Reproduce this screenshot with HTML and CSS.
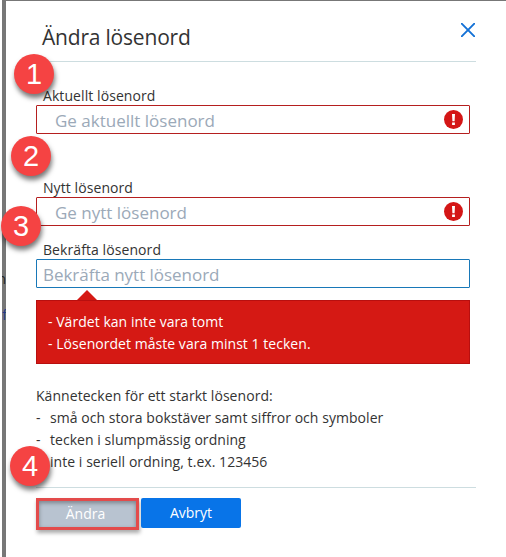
FILE: index.html
```html
<!DOCTYPE html>
<html lang="sv">
<head>
<meta charset="utf-8">
<title>Ändra lösenord</title>
<link rel="stylesheet" href="styles.css">
</head>
<body>
<div class="backdrop"><span class="behind behind-text">n</span><span class="behind behind-link">f</span></div>
<main class="dialog">
  <header class="header">
    <h1>Ändra lösenord</h1>
    <svg class="close" viewBox="0 0 14 14"><path d="M.7.7 13.3 13.3M13.3.7.7 13.3"/></svg>
  </header>
  <form class="form">
    <div class="field current">
      <label>Aktuellt lösenord</label>
      <div class="input invalid"><span>Ge aktuellt lösenord</span>
        <svg class="alert" viewBox="0 0 19 19"><circle cx="9.5" cy="9.5" r="9.5"/><path d="M8 4h3l-.4 7.2H8.4zM8.1 12.5h2.8v2.4H8.1z"/></svg></div>
    </div>
    <div class="field">
      <label>Nytt lösenord</label>
      <div class="input invalid"><span>Ge nytt lösenord</span>
        <svg class="alert" viewBox="0 0 19 19"><circle cx="9.5" cy="9.5" r="9.5"/><path d="M8 4h3l-.4 7.2H8.4zM8.1 12.5h2.8v2.4H8.1z"/></svg></div>
    </div>
    <div class="field">
      <label>Bekräfta lösenord</label>
      <div class="input focused"><span>Bekräfta nytt lösenord</span></div>
    </div>
    <div class="error">
      <p>- Värdet kan inte vara tomt</p>
      <p>- Lösenordet måste vara minst 1 tecken.</p>
    </div>
    <div class="help">
      <p>Kännetecken för ett starkt lösenord:</p>
      <p class="item"><i>-</i><span>små och stora bokstäver samt siffror och symboler</span></p>
      <p class="item"><i>-</i><span>tecken i slumpmässig ordning</span></p>
      <p class="item"><i>-</i><span>inte i seriell ordning, t.ex. 123456</span></p>
    </div>
    <footer class="actions">
      <div class="button change">Ändra</div>
      <div class="button cancel">Avbryt</div>
    </footer>
  </form>
</main>
<div class="badge b1">1</div>
<div class="badge b2">2</div>
<div class="badge b3">3</div>
<div class="badge b4">4</div>
</body>
</html>
```
FILE: styles.css
```css
* { box-sizing: border-box; }
body {
  margin: 0; height: 557px; overflow: hidden; position: relative; display: flex;
  background: #fff; color: #333; font: 14px/22px "Open Sans", "Noto Sans", sans-serif;
}
h1, p { margin: 0; font-weight: 400; white-space: nowrap; }
.backdrop { width: 6px; flex: none; position: relative; overflow: hidden; background: #777; border-left: 2px solid #fff; }
.behind { position: absolute; right: 0; font-size: 14px; }
.behind-text { top: 268px; color: #222; }
.behind-link { top: 304px; right: -1px; color: #223a86; }
.dialog { flex: 1; border-top: 1px solid #777; padding: 0 30px; }
.header { height: 61px; border-bottom: 1px solid #cddde0; display: flex; justify-content: space-between; padding: 18px 1px 0 6px; }
h1 { font-size: 21px; line-height: 36px; letter-spacing: -.2px; }
.close { width: 14px; height: 14px; margin-top: 4px; fill: none; stroke: #1371d6; stroke-width: 1.9; stroke-linecap: round; }
.form { width: 434px; }
.field { height: 62px; }
.current { height: 82px; padding-top: 23px; margin-bottom: 33px; }
label { display: block; height: 20px; line-height: 22px; padding-left: 7px; letter-spacing: .08px; white-space: nowrap; }
.input { height: 29px; border: 1px solid #b51f1f; border-radius: 1px; padding: 0 6px 0 18px; display: flex; align-items: center; justify-content: space-between; color: #9ba9b8; font-size: 17px; white-space: nowrap; line-height: 27px; }
.input span { padding-top: 1px; }
.focused { border-color: #1878b8; padding-left: 6px; }
.focused span { letter-spacing: -.03px; }
.alert { width: 19px; height: 19px; fill: #d41616; }
.alert path { fill: #fff; }
.error { position: relative; height: 64px; margin-top: -1px; padding: 10px 11px; background: #d51914; border: 1px solid #b80f0f; color: #fff; letter-spacing: .04px; }
.error::before { content: ""; position: absolute; left: 40px; top: -11px; border: 10px solid transparent; border-top: 0; border-bottom-color: #d51914; }
.help { height: 123px; padding-top: 21px; letter-spacing: .05px; }
.item { display: flex; }
.item i { width: 14px; font-style: normal; }
.actions { width: 440px; border-top: 1px solid #cddde0; padding-top: 10px; display: flex; gap: 2px; }
.button { height: 30px; line-height: 30px; text-align: center; color: #fff; border-radius: 2px; }
.change { width: 103px; height: 32px; line-height: 26px; padding-right: 4px; background: #b8c3d0; border: 3px solid #e34b4b; border-radius: 0; box-shadow: 1px 3px 4px #0005, inset 0 2px 4px #0005; }
.cancel { width: 100px; background: #0874e8; }
.badge { position: absolute; width: 40px; height: 40px; border-radius: 50%; background: #f54343; color: #fff; font: 29px/41px "Liberation Sans", Arial, sans-serif; text-align: center; box-shadow: 1px 4px 5px #0008; }
.b1 { left: 14px; top: 54px; }
.b2 { left: 11px; top: 136px; }
.b3 { left: 1px; top: 206px; }
.b4 { left: 10px; top: 446px; }
```
